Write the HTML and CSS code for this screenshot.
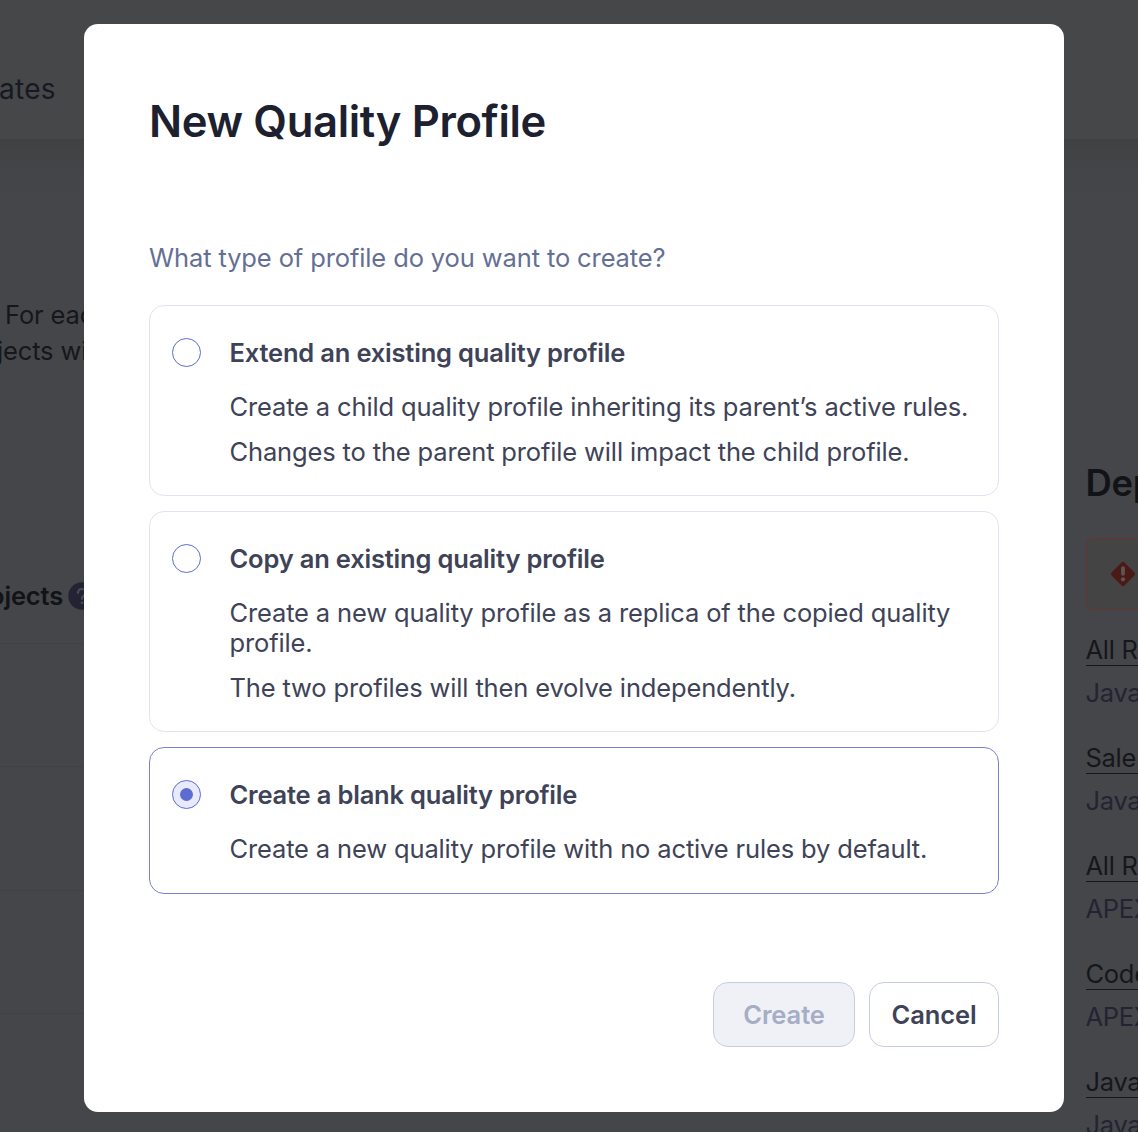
FILE: index.html
```html
<!DOCTYPE html>
<html lang="en">
<head>
<meta charset="utf-8">
<title>New Quality Profile</title>
<link rel="stylesheet" href="styles.css">
</head>
<body>
<div class="page">
  <header class="topbar"><span class="nav-item">ates</span></header>
  <div class="content">
    <main class="profiles">
      <p class="intro"><span class="intro-first">For each</span><br><span class="intro-second">jects wi</span></p>
      <div class="table-head">
        <span>ojects</span>
        <svg class="help" viewBox="0 0 28 28"><circle class="help-disc" cx="14" cy="14" r="13.7"/><path class="help-mark" d="M10 10.8C10.2 8.2 11.7 7 13.8 7C16.2 7 17.7 8.5 17.7 10.6C17.7 13.2 14 13.5 14 16.8"/><circle class="help-dot" cx="14" cy="20.8" r="1.4"/></svg>
      </div>
      <div class="row"></div><div class="row"></div><div class="row"></div><div class="row"></div>
    </main>
    <aside class="sidebar">
      <h2 class="side-title">Dep</h2>
      <div class="alert">
        <svg class="alert-icon" viewBox="0 0 26 26"><path class="alert-shape" d="M11.5 1.6Q13 .1 14.5 1.6L24.4 11.5Q25.9 13 24.4 14.5L14.5 24.4Q13 25.9 11.5 24.4L1.6 14.5Q.1 13 1.6 11.5Z"/><path class="alert-mark" d="M13 7.2V12.8"/><circle class="alert-dot" cx="13" cy="18.3" r="2.1"/></svg>
      </div>
      <ul class="rules">
        <li><a class="rule">All Ru</a><span class="lang">Java</span></li>
        <li><a class="rule">Sales</a><span class="lang">Java</span></li>
        <li><a class="rule">All Ru</a><span class="lang">APEX</span></li>
        <li><a class="rule">Code</a><span class="lang">APEX</span></li>
        <li><a class="rule">Java</a><span class="lang">Java</span></li>
      </ul>
    </aside>
  </div>
</div>
<div class="overlay">
  <section class="modal" role="dialog" aria-labelledby="title">
    <h1 class="title" id="title">New Quality Profile</h1>
    <p class="question">What type of profile do you want to create?</p>
    <div class="options">
      <div class="card">
        <span class="radio"></span>
        <div class="card-body">
          <h3>Extend an existing quality profile</h3>
          <p>Create a child quality profile inheriting its parent’s active rules.</p>
          <p>Changes to the parent profile will impact the child profile.</p>
        </div>
      </div>
      <div class="card">
        <span class="radio"></span>
        <div class="card-body">
          <h3>Copy an existing quality profile</h3>
          <p>Create a new quality profile as a replica of the copied quality profile.</p>
          <p>The two profiles will then evolve independently.</p>
        </div>
      </div>
      <div class="card selected">
        <span class="radio checked"></span>
        <div class="card-body">
          <h3>Create a blank quality profile</h3>
          <p>Create a new quality profile with no active rules by default.</p>
        </div>
      </div>
    </div>
    <div class="actions">
      <button class="btn create" disabled>Create</button>
      <button class="btn cancel">Cancel</button>
    </div>
  </section>
</div>
</body>
</html>
```
FILE: styles.css
```css
* { box-sizing: border-box; }
body {
  margin: 0;
  font: 400 25.5px/30px Inter, "Liberation Sans", sans-serif;
  letter-spacing: -0.145px;
  color: #3e4357;
}
h1, h2, h3, p, ul { margin: 0; padding: 0; }
ul { list-style: none; }

/* Dimmed page behind the dialog */
.page {
  height: 1132px;
  overflow: hidden;
  background: #454649;
  color: #15171b;
}
.topbar {
  height: 139px;
  padding-top: 74px;
  background: #464748;
  color: #171922;
}
.nav-item { display: block; margin-left: -1px; font-size: 28px; letter-spacing: 0.3px; }
.content {
  display: grid;
  grid-template-columns: 84px 52px;
  justify-content: space-between;
  height: 993px;
  background: linear-gradient(#404142, #444548 36px, #454649 60px);
}
.profiles { overflow: hidden; padding-top: 158px; white-space: nowrap; }
.intro { line-height: 36px; }
.intro-first { margin-left: 5px; }
.intro-second { margin-left: -3px; }
.table-head {
  display: flex;
  align-items: center;
  gap: 5px;
  height: 54px;
  margin: 200px 0 20px -11px;
  font-weight: 630;
  color: #111317;
}
.help { flex: none; width: 28px; height: 28px; }
.help-disc { fill: #222433; }
.help-mark { fill: none; stroke: #484b57; stroke-width: 2.2; stroke-linecap: round; }
.help-dot { fill: #484b57; }
.row { height: 123.4px; border-top: 1px solid #404144; }
.sidebar { overflow: hidden; white-space: nowrap; padding-top: 322px; }
.side-title { font-size: 36.4px; line-height: 44px; font-weight: 630; letter-spacing: -0.3px; text-indent: -0.5px; color: #111318; }
.alert {
  display: flex;
  align-items: center;
  width: 200px;
  height: 72px;
  margin-top: 33px;
  padding-left: 22.5px;
  border: 1px solid #6a3331;
  border-radius: 7px;
  background: #454444;
}
.alert-icon { width: 26px; height: 26px; }
.alert-shape { fill: #491a16; }
.alert-mark { stroke: #5d5453; stroke-width: 3.8; stroke-linecap: round; }
.alert-dot { fill: #5d5453; }
.rules { margin-top: 25px; text-indent: -0.6px; letter-spacing: -0.25px; }
.rules li { height: 108px; }
.rule { display: block; width: 200px; height: 31px; border-bottom: 1px solid #15171b; }
.lang { display: block; margin-top: 12px; color: #222433; }

/* Dialog */
.overlay {
  position: absolute;
  inset: 0;
  display: flex;
  justify-content: center;
  align-items: flex-start;
  padding: 24px 74px 0 84px;
}
.modal {
  width: 980px;
  height: 1088px;
  padding: 69px 65px 65px;
  border-radius: 14px;
  background: #fff;
}
.title { font-size: 43.6px; line-height: 58px; font-weight: 640; letter-spacing: -0.36px; color: #1d212f; }
.question { margin-top: 92px; letter-spacing: -0.12px; color: #656f94; }
.options { display: flex; flex-direction: column; gap: 15px; margin-top: 32px; }
.card {
  display: flex;
  gap: 28.5px;
  padding: 32px 22px 28px;
  border: 1px solid #e1e3f2;
  border-radius: 15px;
}
.card.selected { border-color: #7b80cb; padding-bottom: 29px; }
.radio {
  flex: none;
  display: grid;
  place-items: center;
  width: 29px;
  height: 29px;
  border: 1px solid #5d6cd0;
  border-radius: 50%;
}
.radio.checked { background: #e8ebff; }
.radio.checked::after { content: ""; width: 13px; height: 13px; border-radius: 50%; background: #5d6cd0; }
.card-body h3 { font-size: 25.5px; line-height: 30px; font-weight: 640; letter-spacing: -0.19px; margin-bottom: 24px; }
.card-body p + p { margin-top: 15px; }
.actions { display: flex; justify-content: flex-end; gap: 14px; margin-top: 88px; }
.btn {
  height: 65px;
  padding: 0;
  border: 1px solid #c5cde0;
  border-radius: 15px;
  background: #fff;
  color: #3e4357;
  font: inherit;
  font-weight: 630;
  letter-spacing: -0.1px;
}
.create { width: 142px; background: #eff1f7; color: #a6adc5; }
.cancel { width: 130px; }
```
